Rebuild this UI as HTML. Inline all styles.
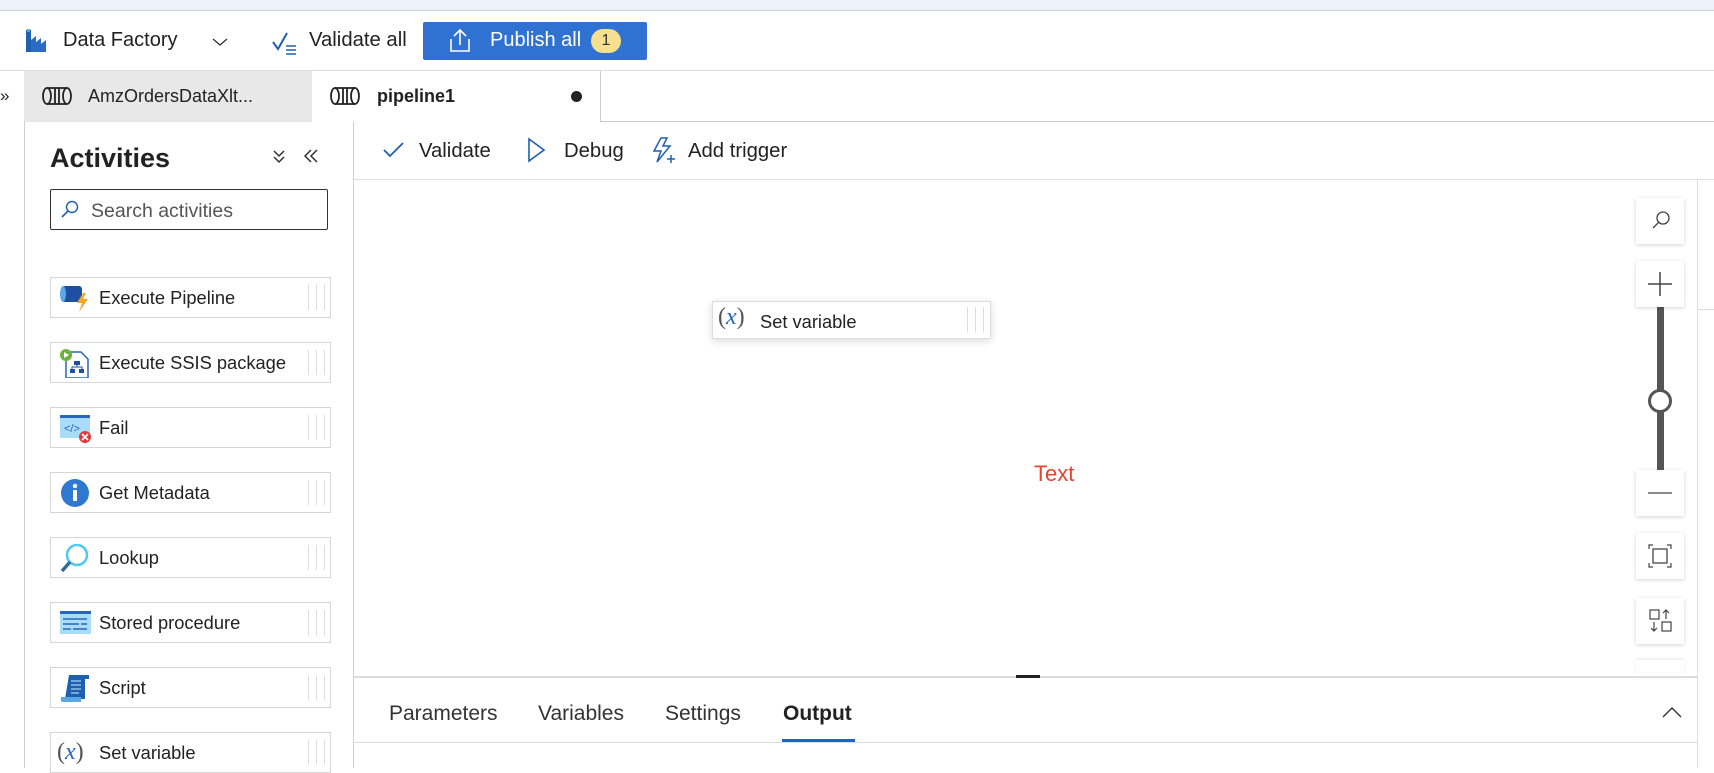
<!DOCTYPE html>
<html><head><meta charset="utf-8"><style>
*{box-sizing:border-box;margin:0;padding:0}
body{width:1714px;height:768px;overflow:hidden;background:#fff;font-family:"Liberation Sans",sans-serif;color:#222;position:relative}
.a{position:absolute}
.item{position:absolute;left:50px;width:281px;height:41px;border:1px solid #d6d6d6;background:#fff;font-size:18.3px;line-height:39px;padding-left:48px;color:#222}
.item .h{position:absolute;left:257px;top:7px;width:17px;height:25px;border-left:1px solid #ddd;border-right:1px solid #ddd}
.item .h:after{content:"";position:absolute;left:7px;top:0;height:25px;border-left:1px solid #ddd}
.item .ic{position:absolute;left:8px;top:5px;width:32px;height:30px}
.zb{position:absolute;left:1636px;width:48px;height:46px;background:#fff;box-shadow:0 1px 4px rgba(0,0,0,.18)}
.tab{position:absolute;top:702px;font-size:21px;color:#333}
</style></head><body>
<div class="a" style="left:0;top:0;width:1714px;height:11px;background:#eef2fa;border-bottom:1px solid #d0d0d0"></div>
<svg class="a" style="left:24px;top:28px" width="26" height="26" viewBox="0 0 26 26"><rect x="2" y="2" width="5" height="22" fill="#1f5fb0"/><path d="M7 12 L12 8 V14 L17 10 V16 L22 12 V24 H7Z" fill="#2b6cc4"/><rect x="3" y="1" width="3" height="3" fill="#5ba8e8"/></svg>
<div class="a" style="left:63px;top:29px;font-size:20px">Data Factory</div>
<svg class="a" style="left:212px;top:37px" width="16" height="10"><path d="M1 2 L8 8 L15 2" fill="none" stroke="#333" stroke-width="1.3"/></svg>
<svg class="a" style="left:272px;top:30px" width="26" height="26"><path d="M1 12 L6 19 L15 3" fill="none" stroke="#1f5fb0" stroke-width="2"/><path d="M14 16h10M14 20h10M14 24h10" stroke="#1f5fb0" stroke-width="1.5"/></svg>
<div class="a" style="left:309px;top:29px;font-size:20.3px">Validate all</div>
<div class="a" style="left:423px;top:22px;width:224px;height:38px;background:#2f72d1;border-radius:2px"></div>
<svg class="a" style="left:448px;top:27px" width="24" height="26"><path d="M12 3V18M6 9L12 3L18 9" fill="none" stroke="#fff" stroke-width="1.6"/><path d="M3 12V24H21V12" fill="none" stroke="#fff" stroke-width="1.6"/></svg>
<div class="a" style="left:490px;top:29px;font-size:20px;color:#fff">Publish all</div>
<div class="a" style="left:591px;top:29px;width:30px;height:24px;border-radius:12px;background:#f5e08e;color:#333;font-size:16px;text-align:center;line-height:24px">1</div>
<div class="a" style="left:0;top:70px;width:1714px;height:1px;background:#ddd"></div>
<div class="a" style="left:0;top:86px;font-size:17px">»</div>
<div class="a" style="left:24px;top:71px;width:288px;height:51px;background:#e8e8e8"></div>
<div class="a" style="left:600px;top:71px;width:1px;height:50px;background:#ccc"></div>
<div class="a" style="left:600px;top:121px;width:1114px;height:1px;background:#ccc"></div>
<svg class="a" style="left:41px;top:86px" width="32" height="20"><g fill="none" stroke="#222" stroke-width="1.8"><ellipse cx="6" cy="10" rx="4" ry="8"/><path d="M6 2H26M6 18H26"/><ellipse cx="26" cy="10" rx="4" ry="8"/><path d="M14 2V18M18 2V18"/></g></svg>
<div class="a" style="left:88px;top:86px;font-size:18px">AmzOrdersDataXlt...</div>
<svg class="a" style="left:329px;top:86px" width="32" height="20"><g fill="none" stroke="#222" stroke-width="1.8"><ellipse cx="6" cy="10" rx="4" ry="8"/><path d="M6 2H26M6 18H26"/><ellipse cx="26" cy="10" rx="4" ry="8"/><path d="M14 2V18M18 2V18"/></g></svg>
<div class="a" style="left:377px;top:86px;font-size:18px;font-weight:bold">pipeline1</div>
<div class="a" style="left:571px;top:91px;width:11px;height:11px;border-radius:50%;background:#222"></div>
<div class="a" style="left:24px;top:121px;width:1px;height:647px;background:#d0d0d0"></div>
<div class="a" style="left:353px;top:121px;width:1px;height:647px;background:#d0d0d0"></div>
<div class="a" style="left:50px;top:143px;font-size:27px;font-weight:bold;color:#222">Activities</div>
<svg class="a" style="left:272px;top:148px" width="14" height="16"><path d="M2 3L7 8L12 3M2 9L7 14L12 9" fill="none" stroke="#333" stroke-width="1.5"/></svg>
<svg class="a" style="left:303px;top:148px" width="16" height="16"><path d="M8 2L2 8L8 14M14 2L8 8L14 14" fill="none" stroke="#333" stroke-width="1.5"/></svg>
<div class="a" style="left:50px;top:189px;width:278px;height:41px;border:1px solid #333;border-radius:2px"></div>
<svg class="a" style="left:60px;top:200px" width="20" height="20"><circle cx="12" cy="7" r="5.5" fill="none" stroke="#1f5fb0" stroke-width="1.4"/><path d="M8 11L2 17" stroke="#1f5fb0" stroke-width="1.6"/></svg>
<div class="a" style="left:91px;top:200px;font-size:19.5px;color:#555">Search activities</div>

<div class="item" style="top:277px"><svg class="ic" viewBox="0 0 32 30"><rect x="3" y="3" width="20" height="16" rx="3" fill="#1f4fa0"/><ellipse cx="4" cy="11" rx="3" ry="8" fill="#5aa7e6"/><path d="M24 10L18 20H23L20 29L29 16H24L27 10Z" fill="#f4a623"/></svg>Execute Pipeline<span class="h"></span></div>
<div class="item" style="top:342px"><svg class="ic" viewBox="0 0 32 30"><path d="M7 4H22L29 11V30H7Z" fill="#fff" stroke="#2766b8" stroke-width="1.5"/><circle cx="7" cy="7" r="6" fill="#6cb33e"/><path d="M5 4L10 7L5 10Z" fill="#fff"/><rect x="15" y="13" width="6" height="4" fill="#1f4fa0"/><rect x="11" y="21" width="5" height="4" fill="#1f4fa0"/><rect x="20" y="21" width="5" height="4" fill="#1f4fa0"/><path d="M18 17V19H13V21M18 19H23V21" fill="none" stroke="#1f4fa0"/></svg>Execute SSIS package<span class="h"></span></div>
<div class="item" style="top:407px"><svg class="ic" viewBox="0 0 32 30"><rect x="1" y="3" width="30" height="22" fill="#a8dcf7"/><rect x="1" y="2" width="30" height="3" fill="#2766b8"/><text x="5" y="19" font-size="11" fill="#2766b8" font-family="Liberation Sans">&lt;/&gt;</text><circle cx="26" cy="24" r="6" fill="#e03b3b"/><path d="M23 21L29 27M29 21L23 27" stroke="#fff" stroke-width="1.6"/></svg>Fail<span class="h"></span></div>
<div class="item" style="top:472px"><svg class="ic" viewBox="0 0 32 30"><circle cx="16" cy="15" r="14" fill="#2f78d0"/><circle cx="16" cy="8" r="2.2" fill="#fff"/><rect x="14" y="12" width="4" height="11" fill="#fff"/></svg>Get Metadata<span class="h"></span></div>
<div class="item" style="top:537px"><svg class="ic" viewBox="0 0 32 30"><circle cx="18" cy="12" r="10" fill="none" stroke="#50c8f0" stroke-width="2.5"/><path d="M11 19L3 28" stroke="#2d6a9e" stroke-width="3.5"/></svg>Lookup<span class="h"></span></div>
<div class="item" style="top:602px"><svg class="ic" viewBox="0 0 32 30"><rect x="1" y="4" width="31" height="22" fill="#a8dcf7"/><rect x="1" y="3" width="31" height="3" fill="#2766b8"/><path d="M4 11H28M4 16H20M22 16H28M4 21H12M14 21H28" stroke="#2766b8" stroke-width="1.5"/></svg>Stored procedure<span class="h"></span></div>
<div class="item" style="top:667px"><svg class="ic" viewBox="0 0 32 30"><path d="M10 2H30V6H26V26H6Z" fill="#1f5fb0"/><path d="M2 24H22V29H4Q1 29 2 24Z" fill="#5aa7e6"/><path d="M12 8H22M12 12H22M12 16H22M12 20H20" stroke="#a8d4f7" stroke-width="1.3"/></svg>Script<span class="h"></span></div>
<div class="item" style="top:732px"><span class="a" style="left:6px;top:0;font-size:24px;color:#555;font-family:'Liberation Serif',serif">(<i style="color:#2766b8">x</i>)</span>Set variable<span class="h"></span></div>

<svg class="a" style="left:383px;top:141px" width="22" height="18"><path d="M1 9L7 15L20 2" fill="none" stroke="#1f5fb0" stroke-width="1.8"/></svg>
<div class="a" style="left:419px;top:140px;font-size:20.3px">Validate</div>
<svg class="a" style="left:527px;top:137px" width="20" height="26"><path d="M2 2L17 13L2 24Z" fill="none" stroke="#1f5fb0" stroke-width="1.6"/></svg>
<div class="a" style="left:564px;top:140px;font-size:20.3px">Debug</div>
<svg class="a" style="left:651px;top:136px" width="26" height="28"><path d="M10 2L3 15H10L6 26L19 10H12L16 2Z" fill="none" stroke="#1f5fb0" stroke-width="1.5"/><path d="M20 19V27M16 23H24" stroke="#1f5fb0" stroke-width="1.5"/></svg>
<div class="a" style="left:688px;top:140px;font-size:20.3px">Add trigger</div>
<div class="a" style="left:354px;top:179px;width:1360px;height:1px;background:#ddd"></div>
<div class="a" style="left:1697px;top:179px;width:1px;height:589px;background:#ddd"></div>
<div class="a" style="left:1697px;top:309px;width:17px;height:1px;background:#ddd"></div>
<div class="a" style="left:712px;top:301px;width:279px;height:38px;background:#fff;border:1px solid #ddd;box-shadow:0 2px 8px rgba(0,0,0,.15)"></div>
<div class="a" style="left:718px;top:304px;font-size:24px;color:#555;font-family:'Liberation Serif',serif">(<i style="color:#2766b8">x</i>)</div>
<div class="a" style="left:760px;top:311px;font-size:18.3px">Set variable</div>
<div class="a" style="left:967px;top:307px;width:17px;height:25px;border-left:1px solid #ddd;border-right:1px solid #ddd"></div>
<div class="a" style="left:975px;top:307px;width:1px;height:25px;background:#ddd"></div>
<div class="a" style="left:1034px;top:461px;font-size:22px;color:#e8432e">Text</div>
<div class="zb" style="top:198px"><svg width="48" height="46"><circle cx="27" cy="20" r="6" fill="none" stroke="#444" stroke-width="1.3"/><path d="M23 24L17 30" stroke="#444" stroke-width="1.3"/></svg></div>
<div class="a" style="left:1657px;top:305px;width:7px;height:167px;background:#555"></div>
<div class="zb" style="top:261px"><svg width="48" height="46"><path d="M24 11V35M12 23H36" stroke="#444" stroke-width="1.5"/></svg></div>
<div class="a" style="left:1648px;top:389px;width:24px;height:24px;border-radius:50%;border:3px solid #555;background:#fff"></div>
<div class="zb" style="top:470px"><svg width="48" height="46"><path d="M12 23H36" stroke="#444" stroke-width="1.3"/></svg></div>
<div class="zb" style="top:533px"><svg width="48" height="46"><rect x="17" y="16" width="14" height="14" fill="none" stroke="#444" stroke-width="1.3"/><path d="M13 16V12H17M31 12H35V16M35 30V34H31M17 34H13V30" fill="none" stroke="#444" stroke-width="1.2"/></svg></div>
<div class="zb" style="top:598px"><svg width="48" height="46"><rect x="14" y="12" width="9" height="9" fill="none" stroke="#444" stroke-width="1.2"/><rect x="26" y="24" width="9" height="9" fill="none" stroke="#444" stroke-width="1.2"/><path d="M18 24V33M15 30L18 33L21 30M30 21V12M27 15L30 12L33 15" fill="none" stroke="#444" stroke-width="1.2"/></svg></div>
<div class="zb" style="top:660px;height:12px;box-shadow:0 -1px 3px rgba(0,0,0,.1)"></div>
<div class="a" style="left:354px;top:676px;width:1343px;height:2px;background:#ddd"></div>
<div class="a" style="left:1016px;top:675px;width:24px;height:3px;background:#222"></div>
<div class="a" style="left:354px;top:742px;width:1343px;height:1px;background:#ddd"></div>
<div class="tab" style="left:389px">Parameters</div>
<div class="tab" style="left:538px">Variables</div>
<div class="tab" style="left:665px">Settings</div>
<div class="tab" style="left:783px;font-weight:bold;color:#222">Output</div>
<div class="a" style="left:782px;top:739px;width:73px;height:3px;background:#1f64c4"></div>
<svg class="a" style="left:1662px;top:706px" width="20" height="12"><path d="M1 11L10 2L19 11" fill="none" stroke="#333" stroke-width="1.4"/></svg>
</body></html>
